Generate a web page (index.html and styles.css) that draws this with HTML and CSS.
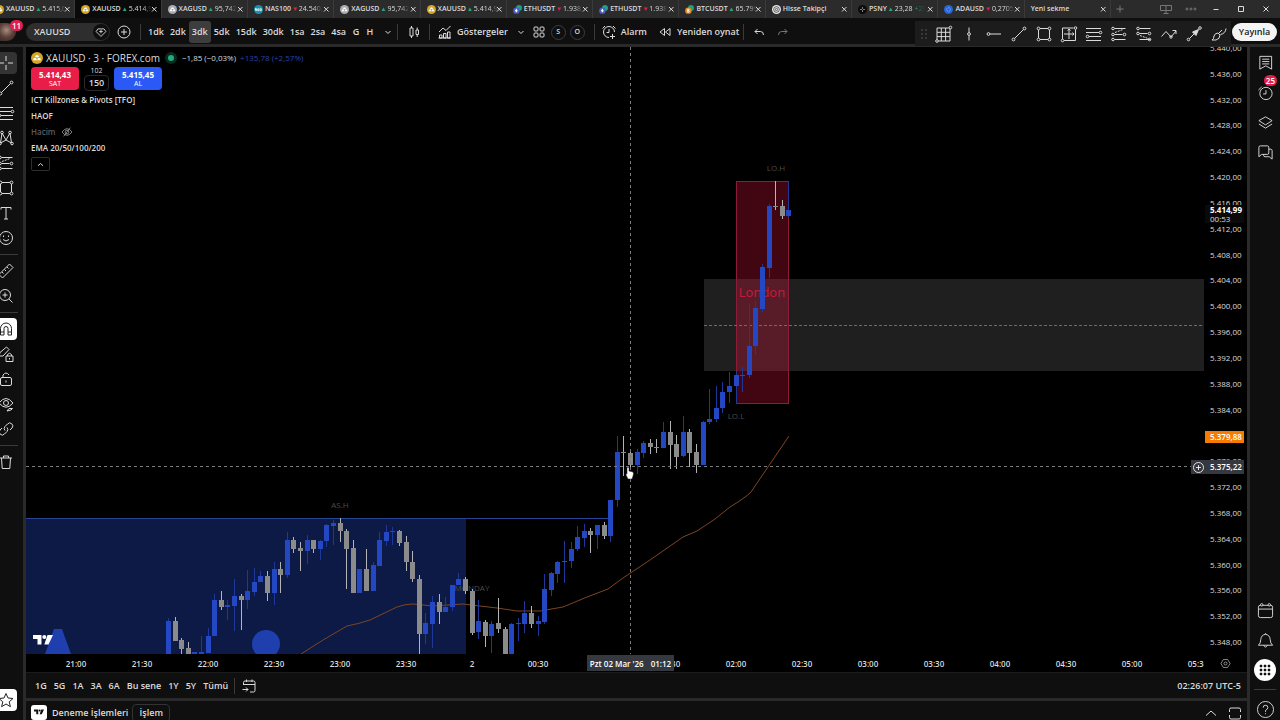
FILE: index.html
```
<!DOCTYPE html>
<html lang="tr">
<head>
    <meta charset="UTF-8">
    <meta name="viewport" content="width=device-width, initial-scale=1.0">
    <title>XAUUSD 5.414,99</title>
    <link rel="stylesheet" href="styles.css">
</head>
<body>

    <!-- Icon set -->
    <svg class="sprite" aria-hidden="true">
        <symbol id="close" viewBox="0 0 8 8"><path d="M2 2l4.5 4.5M6.500 2L2 6.500"/></symbol>
        <symbol id="gold" viewBox="0 0 12 12"><circle cx="6" cy="6" r="6" fill="#d3a623" stroke="none"/><path d="M4.700 3.200h2.600l.7 2H4zM2.800 6h2.400l.6 2.200H2.100zM6.800 6h2.400l.7 2.200H6.200z" fill="#fff" stroke="none"/></symbol>
        <symbol id="silver" viewBox="0 0 12 12"><circle cx="6" cy="6" r="6" fill="#a9abb0" stroke="none"/><path d="M4.700 3.200h2.600l.7 2H4zM2.800 6h2.400l.6 2.200H2.100zM6.800 6h2.400l.7 2.200H6.200z" fill="#fff" stroke="none"/></symbol>
        <symbol id="nas" viewBox="0 0 12 12"><circle cx="6" cy="6" r="6" fill="#1592ad" stroke="none"/><path d="M2 7.500v-3l1.500 3v-3M5 5h1.500v2.500H5zM8 5h1.800v2.500H8z" stroke="#fff"/></symbol>
        <symbol id="eth" viewBox="0 0 12 12"><circle cx="8" cy="4" r="4" fill="#1ba27a" stroke="none"/><circle cx="4.500" cy="7.500" r="4.300" fill="#4d5fc1" stroke="none"/><path d="M4.500 4.500l1.800 3-1.800 2.500-1.800-2.500z" fill="#fff" stroke="none"/></symbol>
        <symbol id="btc" viewBox="0 0 12 12"><circle cx="8" cy="4" r="4" fill="#1ba27a" stroke="none"/><circle cx="4.500" cy="7.500" r="4.300" fill="#e08b2c" stroke="none"/><path d="M3.500 5.500h1.500q1 1 0 2h-1.500h1.800q1 1 0 2H3.500z" stroke="#fff"/></symbol>
        <symbol id="hisse" viewBox="0 0 12 12"><circle cx="6" cy="6" r="6" fill="#e8e8e8" stroke="none"/><circle cx="6" cy="6" r="3.800" stroke="#333"/><circle cx="6" cy="6" r="1.500" stroke="#333"/></symbol>
        <symbol id="psny" viewBox="0 0 12 12"><circle cx="6" cy="6" r="6" fill="#0b0b0b" stroke="none"/><path d="M3 6h2M7 6h2M6 3v2M6 7v2" stroke="#ddd"/></symbol>
        <symbol id="ada" viewBox="0 0 12 12"><circle cx="6" cy="6" r="6" fill="#2766d8" stroke="none"/><circle cx="6" cy="6" r="2.500" stroke="#c9dcff" stroke-dasharray="1 1"/></symbol>
        <symbol id="gem" viewBox="0 0 18 18"><path d="M5.500 5.500h7l2 3L9 14 3.500 8.500zM9 6.500v4M7 8.500h4"/></symbol>
        <symbol id="plus-circle" viewBox="0 0 18 18"><circle cx="9" cy="9" r="6"/><path d="M9 6v6M6 9h6"/></symbol>
        <symbol id="chevron" viewBox="0 0 18 18"><path d="M6.500 8L9 10.500 11.500 8"/></symbol>
        <symbol id="chevron-up" viewBox="0 0 18 18"><path d="M4 11.500L9 7l5 4.500"/></symbol>
        <symbol id="candles" viewBox="0 0 18 18"><path d="M5 5h3v8H5zM6.500 3v2M6.500 13v2M11 7h2.500v4.500H11zM12.200 4.500V7M12.200 11.500V14"/></symbol>
        <symbol id="indicators" viewBox="0 0 18 18"><path d="M3.500 15v-3h2.500v3zM7.500 15v-4.500h2.500V15zM11.500 15V9H14v6zM3 9l4-4 3 2.500 4.500-4.500M2.500 15h12.500"/></symbol>
        <symbol id="layouts" viewBox="0 0 18 18"><rect x="4" y="4" width="4" height="4" rx="1"/><rect x="10" y="4" width="4" height="4" rx="1"/><rect x="4" y="10" width="4" height="4" rx="1"/><rect x="10" y="10" width="4" height="4" rx="1"/></symbol>
        <symbol id="alarm" viewBox="0 0 18 18"><path d="M14.500 9a5.500 5.500 0 1 0-5.500 5.500M9 6v3.500H6.500M2.500 5.500L5 3M13 3l2.500 2.500M12.500 11v5M10 13.500h5"/></symbol>
        <symbol id="rewind" viewBox="0 0 18 18"><path d="M8.500 5.500v7L4 9zM14 5.500v7L9.500 9z"/></symbol>
        <symbol id="undo" viewBox="0 0 18 18"><path d="M7.500 6L5 8.500 7.500 11M5 8.500h5.500q3 0 3 3.500"/></symbol>
        <symbol id="redo" viewBox="0 0 18 18"><path d="M10.500 6L13 8.500 10.500 11M13 8.500H7.500q-3 0-3 3.500"/></symbol>
        <symbol id="grid-tool" viewBox="0 0 18 18"><path d="M2 3h13v13H2zM6.300 3v13M10.600 3v13M2 7.300h13M2 11.600h13"/><g fill="#1c1c1c"><circle cx="2" cy="16" r="1.300"/><circle cx="15.500" cy="2.500" r="1.300"/></g></symbol>
        <symbol id="vline" viewBox="0 0 18 18"><path d="M9 2.500v5M9 10.500v5"/><circle cx="9" cy="9" r="1.400"/></symbol>
        <symbol id="ray" viewBox="0 0 18 18"><circle cx="3.500" cy="9" r="1.400"/><path d="M5 9h11"/></symbol>
        <symbol id="line" viewBox="0 0 18 18"><circle cx="3.500" cy="14.500" r="1.400"/><circle cx="14.500" cy="3.500" r="1.400"/><path d="M4.500 13.500l9-9"/></symbol>
        <symbol id="rect" viewBox="0 0 18 18"><path d="M5 3.500h8M5 14.500h8M3.500 5v8M14.500 5v8"/><circle cx="3.500" cy="3.500" r="1.400"/><circle cx="14.500" cy="3.500" r="1.400"/><circle cx="3.500" cy="14.500" r="1.400"/><circle cx="14.500" cy="14.500" r="1.400"/></symbol>
        <symbol id="range" viewBox="0 0 18 18"><path d="M2.500 3h11M2.500 3v11M4 15.500h11.500M15.500 4.500v11M9 4v10M4 9h10M7.500 5.500L9 4l1.500 1.500M12.500 7.500L14 9l-1.500 1.500"/><circle cx="2.500" cy="15.500" r="1.300"/><circle cx="15.500" cy="3" r="1.300"/></symbol>
        <symbol id="fib" viewBox="0 0 18 18"><path d="M1 3.500h15M1 7.500h13M4 11.500h12M1 15.500h15"/><circle cx="15.500" cy="7.500" r="1.300"/><circle cx="2.500" cy="11.500" r="1.300"/></symbol>
        <symbol id="long" viewBox="0 0 18 18"><path d="M4.500 3.500h11M4.500 9.500h8M4.500 14.500h11"/><path d="M5 7.500l8-3" stroke-dasharray="2 1"/><circle cx="3" cy="3.500" r="1.300"/><circle cx="3" cy="9.500" r="1.300"/><circle cx="14.500" cy="9.500" r="1.300"/><circle cx="3" cy="14.500" r="1.300"/></symbol>
        <symbol id="short" viewBox="0 0 18 18"><path d="M4.500 3.500h11M4.500 8.500h8M4.500 14.500h11"/><path d="M5 10.500l8 3" stroke-dasharray="2 1"/><circle cx="3" cy="3.500" r="1.300"/><circle cx="3" cy="8.500" r="1.300"/><circle cx="14.500" cy="8.500" r="1.300"/><circle cx="14.500" cy="14.500" r="1.300"/></symbol>
        <symbol id="path-tool" viewBox="0 0 18 18"><path d="M1.500 11.500l4.500-5 5 5.500 5-6M12.500 5.500H16V9"/><circle cx="11" cy="12" r="1.200"/></symbol>
        <symbol id="arrow" viewBox="0 0 18 18"><circle cx="3.500" cy="14.500" r="1.300"/><circle cx="15" cy="3" r="1.300"/><path d="M4.500 13.500L10 8"/><path d="M7.500 7l6-2.500-2.500 6z" fill="currentColor"/></symbol>
        <symbol id="brush" viewBox="0 0 18 18"><path d="M2 15q2-1 2-4 1-3 4-3l2 2q0 4-4 5zM9 8l3-3M10.500 9.500q5-1 5.500-6"/></symbol>
        <symbol id="cross" viewBox="0 0 18 18"><path d="M9 2v5M9 11v5M2 9h5M11 9h5"/></symbol>
        <symbol id="pattern" viewBox="0 0 18 18"><path d="M3.500 14L5 4l4 7 4-7 1.500 10M3.500 14L9 11l5.500 3"/><circle cx="3" cy="14.500" r="1.300"/><circle cx="5" cy="3.500" r="1.300"/><circle cx="13" cy="3.500" r="1.300"/><circle cx="15" cy="14.500" r="1.300"/></symbol>
        <symbol id="text" viewBox="0 0 18 18"><path d="M4 5.500V3.500h10v2M9 3.500v11.500M7 15h4"/></symbol>
        <symbol id="smile" viewBox="0 0 18 18"><circle cx="9" cy="9" r="6.500"/><path d="M6.500 6.500v1.500M11.500 6.500v1.500M6 10.500q3 3 6 0"/></symbol>
        <symbol id="ruler" viewBox="0 0 18 18"><path d="M2 12.500L12.500 2 16 5.500 5.500 16zM5 10l1.500 1.500M7.500 7.500L9 9M10 5l1.500 1.500"/></symbol>
        <symbol id="zoom-in" viewBox="0 0 18 18"><circle cx="8" cy="8" r="5.500"/><path d="M8 5.500v5M5.500 8h5M12 12l3.500 3.500"/></symbol>
        <symbol id="magnet" viewBox="0 0 18 18"><path d="M3.500 15V8.500a5.500 5.500 0 0 1 11 0V15h-3.500V8.500a2 2 0 0 0-4 0V15zM3.500 12h3.500M11 12h3.500"/></symbol>
        <symbol id="lock-draw" viewBox="0 0 18 18"><path d="M2 11l1-3.500L9.500 2 12 4.500 6 11zM9 11h7v5.500H9zM10.500 11V9.500q2-2.500 4 0V11M12.500 13v1.500"/></symbol>
        <symbol id="lock" viewBox="0 0 18 18"><rect x="3.500" y="7.500" width="11" height="8" rx="1.500"/><path d="M6 7.500V5q3-4 6 0M9 10.500v2"/></symbol>
        <symbol id="hide" viewBox="0 0 18 18"><path d="M2 8q7-9 14 0-7 8.500-14 0zM10 16l2-2.500h3.500L14 15z"/><circle cx="9" cy="8" r="2.500"/></symbol>
        <symbol id="link" viewBox="0 0 18 18"><path d="M8 10.500a3 3 0 0 1 0-4L10.500 4A3 3 0 0 1 15 8l-2 2M10 7.500a3 3 0 0 1 0 4L7.500 14A3 3 0 0 1 3 10l2-2"/></symbol>
        <symbol id="trash" viewBox="0 0 18 18"><path d="M3 5h12M4.500 5l.7 10.500h7.600L13.500 5M6.500 5V3h5v2"/></symbol>
        <symbol id="star" viewBox="0 0 18 18"><path d="M9 2.500l2 4.500 5 .5-3.800 3.300 1.200 4.900L9 13l-4.400 2.700 1.200-4.900L2 7.500l5-.5z"/></symbol>
        <symbol id="eye-off" viewBox="0 0 18 18"><path d="M1.500 9q7.500-10 15 0-7.500 10-15 0zM4 15.500L14 2.500"/><circle cx="9" cy="9" r="2.800"/></symbol>
        <symbol id="watchlist" viewBox="0 0 18 18"><path d="M3 2.500h12.500V16L9.300 12.500 3 16zM5.500 5.500H13M5.500 8H13M5.500 10.500H13"/></symbol>
        <symbol id="clock" viewBox="0 0 18 18"><circle cx="9.500" cy="10" r="6.500"/><path d="M9.500 6.500v4H6.500M1.500 6.500L5 3"/></symbol>
        <symbol id="layers" viewBox="0 0 18 18"><path d="M9 3l7 4-7 4.500L2 7zM2 10.500L9 15l7-4.500"/></symbol>
        <symbol id="chat" viewBox="0 0 18 18"><path d="M2 3.500q0-1.500 1.500-1.500H11q1.500 0 1.500 1.500v6q0 1.500-1.500 1.500H5l-3 2.500zM12.500 5.500h2q1.500 0 1.500 1.500v9l-3-2.500H8.500Q7 13.500 7 12v-1"/></symbol>
        <symbol id="calendar" viewBox="0 0 18 18"><rect x="1.500" y="3.500" width="15" height="13" rx="2"/><path d="M2 7.500h14"/><circle cx="5" cy="3" r="1.300" fill="#0f0f0f"/><circle cx="13" cy="3" r="1.300" fill="#0f0f0f"/></symbol>
        <symbol id="bell" viewBox="0 0 18 18"><path d="M1.500 14h15q-2.500-2-2.500-6-.5-5-5-5.500-4.500.5-5 5.500 0 4-2.500 6zM7 14q2 4 4 0M8 2.500q1-2 2 0"/></symbol>
        <symbol id="apps" viewBox="0 0 22 22"><circle cx="11" cy="11" r="11" fill="#fff" stroke="none"/><path d="M6 6h2v2H6zM10 6h2v2h-2zM14 6h2v2h-2zM6 10h2v2H6zM10 10h2v2h-2zM14 10h2v2h-2zM6 14h2v2H6zM10 14h2v2h-2zM14 14h2v2h-2z" fill="#111" stroke="#111" stroke-width=".5"/></symbol>
        <symbol id="help" viewBox="0 0 18 18"><circle cx="9" cy="9" r="8.500"/><path d="M6.500 7q0-2.500 2.500-2.500T11.500 7q0 1.500-2.500 3v1.500M9 13v1"/></symbol>
        <symbol id="goto" viewBox="0 0 18 18"><path d="M3.500 8V5.500Q3.500 4 5 4h8.500Q15 4 15 5.500v8q0 1.500-1.500 1.500H10M3.500 7.500H15M6.500 2.500V5M12 2.500V5M2.500 12.500h5.500M6 10.500l2 2-2 2"/></symbol>
        <symbol id="settings" viewBox="0 0 18 18"><path d="M5.500 2.500h7L16.500 9l-4 6.500h-7L1.500 9z"/><circle cx="9" cy="9" r="2.500"/></symbol>
        <symbol id="expand" viewBox="0 0 18 18"><path d="M3.500 8V5.500Q3.500 4 5 4h8q1.500 0 1.500 1.500V8M3.500 11v2.500Q3.500 15 5 15h8q1.500 0 1.500-1.500V11"/></symbol>
        <symbol id="tv" viewBox="0 0 20 12"><path d="M0 1h8.500v9.500H4.500V5H0zM14.500 1H20l-4.500 9.500h-4.200z" fill="currentColor" stroke="none"/><circle cx="11.300" cy="3" r="2" fill="currentColor" stroke="none"/></symbol>
    </svg>

    <!-- Window tabs -->
    <header class="titlebar">
        <nav class="tabs">
            <div class="tab"><a href="#"><svg><use href="#gold"/></svg><b>XAUUSD</b><i class="up">▲</i><span>5.415,0</span></a><button aria-label="Kapat"><svg><use href="#close"/></svg></button></div>
            <div class="tab active"><a href="#"><svg><use href="#gold"/></svg><b>XAUUSD</b><i class="up">▲</i><span>5.414,9</span></a><button aria-label="Kapat"><svg><use href="#close"/></svg></button></div>
            <div class="tab"><a href="#"><svg><use href="#silver"/></svg><b>XAGUSD</b><i class="up">▲</i><span>95,742</span></a><button aria-label="Kapat"><svg><use href="#close"/></svg></button></div>
            <div class="tab"><a href="#"><svg><use href="#nas"/></svg><b>NAS100</b><i class="down">▼</i><span>24.540,</span></a><button aria-label="Kapat"><svg><use href="#close"/></svg></button></div>
            <div class="tab"><a href="#"><svg><use href="#silver"/></svg><b>XAGUSD</b><i class="up">▲</i><span>95,742</span></a><button aria-label="Kapat"><svg><use href="#close"/></svg></button></div>
            <div class="tab"><a href="#"><svg><use href="#gold"/></svg><b>XAUUSD</b><i class="up">▲</i><span>5.414,9</span></a><button aria-label="Kapat"><svg><use href="#close"/></svg></button></div>
            <div class="tab"><a href="#"><svg><use href="#eth"/></svg><b>ETHUSDT</b><i class="down">▼</i><span>1.938,</span></a><button aria-label="Kapat"><svg><use href="#close"/></svg></button></div>
            <div class="tab"><a href="#"><svg><use href="#eth"/></svg><b>ETHUSDT</b><i class="down">▼</i><span>1.938</span></a><button aria-label="Kapat"><svg><use href="#close"/></svg></button></div>
            <div class="tab"><a href="#"><svg><use href="#btc"/></svg><b>BTCUSDT</b><i class="up">▲</i><span>65.799</span></a><button aria-label="Kapat"><svg><use href="#close"/></svg></button></div>
            <div class="tab"><a href="#"><svg><use href="#hisse"/></svg><b>Hisse Takipçi</b></a><button aria-label="Kapat"><svg><use href="#close"/></svg></button></div>
            <div class="tab"><a href="#"><svg><use href="#psny"/></svg><b>PSNY</b><i class="up">▲</i><span>23,28 <em>+20</em></span></a><button aria-label="Kapat"><svg><use href="#close"/></svg></button></div>
            <div class="tab"><a href="#"><svg><use href="#ada"/></svg><b>ADAUSD</b><i class="down">▼</i><span>0,2705</span></a><button aria-label="Kapat"><svg><use href="#close"/></svg></button></div>
            <div class="tab"><a href="#"><b>Yeni sekme</b></a><button aria-label="Kapat"><svg><use href="#close"/></svg></button></div>
        </nav>
        <button class="new-tab" aria-label="Yeni sekme"><svg viewBox="0 0 18 18"><path d="M9 5.500v7M5.500 9h7"/></svg></button>
        <div class="window-buttons">
            <button class="dim" aria-label="Ekranlar"><svg viewBox="0 0 18 18"><path d="M3.500 5.500h11v5h-11zM9 5.500v8M6.500 13.500h5"/></svg></button>
            <button class="dim" aria-label="Menü"><svg viewBox="0 0 18 18"><circle cx="5" cy="9" r="1"/><circle cx="9" cy="9" r="1"/><circle cx="13" cy="9" r="1"/></svg></button>
            <button aria-label="Küçült"><svg viewBox="0 0 18 18"><path d="M6.500 9.500h5"/></svg></button>
            <button aria-label="Büyüt"><svg viewBox="0 0 18 18"><path d="M6.500 6.500h5v5h-5z"/></svg></button>
            <button aria-label="Kapat"><svg viewBox="0 0 18 18"><path d="M6.500 6.500l5 5M11.500 6.500l-5 5"/></svg></button>
        </div>
    </header>

    <!-- Top toolbar -->
    <div class="toolbar">
        <div class="avatar"><span class="badge">11</span></div>
        <button class="symbol">XAUUSD <svg class="icon"><use href="#gem"/></svg></button>
        <button class="compare" aria-label="Karşılaştır"><svg class="icon"><use href="#plus-circle"/></svg></button>
        <span class="sep"></span>
        <div class="intervals">
            <button>1dk</button><button>2dk</button><button class="active">3dk</button><button>5dk</button><button>15dk</button><button>30dk</button><button>1sa</button><button>2sa</button><button>4sa</button><button>G</button><button>H</button>
        </div>
        <button aria-label="Periyotlar"><svg class="icon"><use href="#chevron"/></svg></button>
        <span class="sep"></span>
        <button class="wide" aria-label="Mumlar"><svg class="icon"><use href="#candles"/></svg></button>
        <span class="sep"></span>
        <button class="labelled first"><svg class="icon"><use href="#indicators"/></svg>Göstergeler</button>
        <button aria-label="Favoriler"><svg class="icon"><use href="#chevron"/></svg></button>
        <button aria-label="Şablonlar"><svg class="icon"><use href="#layouts"/></svg></button>
        <button class="round">S</button>
        <button class="round">O</button>
        <span class="sep"></span>
        <button class="labelled"><svg class="icon"><use href="#alarm"/></svg>Alarm</button>
        <button class="labelled"><svg class="icon"><use href="#rewind"/></svg>Yeniden oynat</button>
        <span class="sep"></span>
        <button class="undo" aria-label="Geri al"><svg class="icon"><use href="#undo"/></svg></button>
        <button class="dim" aria-label="Yinele"><svg class="icon"><use href="#redo"/></svg></button>

        <div class="favorites">
            <svg class="grip" viewBox="0 0 8 12"><path d="M1 2h2M5 2h2M1 6h2M5 6h2M1 10h2M5 10h2"/></svg>
            <button aria-label="Izgara"><svg class="icon"><use href="#grid-tool"/></svg></button>
            <button aria-label="Dikey çizgi"><svg class="icon"><use href="#vline"/></svg></button>
            <button aria-label="Yatay ışın"><svg class="icon"><use href="#ray"/></svg></button>
            <button aria-label="Trend çizgisi"><svg class="icon"><use href="#line"/></svg></button>
            <button aria-label="Dikdörtgen"><svg class="icon"><use href="#rect"/></svg></button>
            <button aria-label="Fiyat aralığı"><svg class="icon"><use href="#range"/></svg></button>
            <button aria-label="Fibonacci"><svg class="icon"><use href="#fib"/></svg></button>
            <button aria-label="Uzun pozisyon"><svg class="icon"><use href="#long"/></svg></button>
            <button aria-label="Kısa pozisyon"><svg class="icon"><use href="#short"/></svg></button>
            <button aria-label="Yol"><svg class="icon"><use href="#path-tool"/></svg></button>
            <button aria-label="Ok"><svg class="icon"><use href="#arrow"/></svg></button>
            <button aria-label="Fırça"><svg class="icon"><use href="#brush"/></svg></button>
        </div>
        <button class="publish">Yayınla</button>
    </div>

    <div class="workspace">
        <!-- Drawing tools -->
        <aside class="tools">
            <button class="hover" aria-label="İmleç"><svg class="icon"><use href="#cross"/></svg></button>
            <button aria-label="Trend çizgisi"><svg class="icon"><use href="#line"/></svg></button>
            <button aria-label="Fibonacci"><svg class="icon"><use href="#fib"/></svg></button>
            <button aria-label="Formasyon"><svg class="icon"><use href="#pattern"/></svg></button>
            <button aria-label="Tahmin"><svg class="icon"><use href="#long"/></svg></button>
            <button aria-label="Şekiller"><svg class="icon"><use href="#rect"/></svg></button>
            <button aria-label="Metin"><svg class="icon"><use href="#text"/></svg></button>
            <button aria-label="Simgeler"><svg class="icon"><use href="#smile"/></svg></button>
            <hr>
            <button aria-label="Ölç"><svg class="icon"><use href="#ruler"/></svg></button>
            <button aria-label="Yakınlaştır"><svg class="icon"><use href="#zoom-in"/></svg></button>
            <hr>
            <button class="on" aria-label="Mıknatıs"><svg class="icon"><use href="#magnet"/></svg></button>
            <button aria-label="Çizim modu"><svg class="icon"><use href="#lock-draw"/></svg></button>
            <button aria-label="Kilitle"><svg class="icon"><use href="#lock"/></svg></button>
            <button aria-label="Gizle"><svg class="icon"><use href="#hide"/></svg></button>
            <button aria-label="Bağla"><svg class="icon"><use href="#link"/></svg></button>
            <hr>
            <button aria-label="Sil"><svg class="icon"><use href="#trash"/></svg></button>
            <button class="on last" aria-label="Favori çizimler"><svg class="icon"><use href="#star"/></svg></button>
        </aside>

        <main class="center">
            <div class="chart">
                <div class="pane">
                    <svg class="plot" viewBox="26 47 1178 607" preserveAspectRatio="xMinYMin slice">
                        <rect class="asia" x="26" y="518" width="440" height="136"/>
                        <path d="M26 518.500H610" stroke="#274594"/>
                        <path class="watermark" d="M45 654l9-25h8l9 25z"/>
                        <circle class="watermark" cx="266" cy="644" r="14"/>
                        <rect class="gap-zone" x="704" y="279" width="500" height="92"/>
                        <rect x="736.500" y="181.500" width="52" height="222" fill="#f0173f" fill-opacity=".27" stroke="#8c1c38"/>
                        <path d="M704 325.500h500" stroke="#6c6c6c" stroke-dasharray="3 2"/>
                        <g class="marks">
                            <text x="340" y="508">AS.H</text>
                            <text x="472" y="591">MONDAY</text>
                            <text x="736" y="419">LO.L</text>
                            <text x="776" y="171">LO.H</text>
                            <text class="session" x="762" y="297">London</text>
                        </g>
                        <path class="ema" d="M301 654L323 640 347 626Q358 624 370 620L397 607Q405 604 413 604L433 606 463 604 497 608 517 611 540 611 563 607 587 597 608 589 623 578 650 560 683 537 697 531 715 519 730 507Q745 498 751 492L770 464 789 436"/>
                        <g id="candleLayer"></g>
                        <path class="crosshair" d="M630.500 47V654M26 466.500H1204"/>
                        <path d="M627 468q1-2 2 0v3l4 1q1 1 0 4l-1 3h-4l-2-4q0-2 1-1z" fill="#fff" stroke="#222" stroke-width=".5"/>
                    </svg>

                    <div class="legend">
                        <div class="title-row">
                            <svg class="coin"><use href="#gold"/></svg>
                            <h1>XAUUSD · 3 · FOREX.com</h1>
                            <span class="dot"></span>
                            <span class="change">−1,85 (−0,03%)</span>
                            <span class="gain">+135,78 (+2,57%)</span>
                        </div>
                        <div class="trade-row">
                            <button class="sell"><b>5.414,43</b>SAT</button>
                            <div class="spread"><span>102</span><button>150</button></div>
                            <button class="buy"><b>5.415,45</b>AL</button>
                        </div>
                        <div class="study">ICT Killzones &amp; Pivots [TFO]</div>
                        <div class="study">HAOF</div>
                        <div class="study off">Hacim <svg><use href="#eye-off"/></svg></div>
                        <div class="study">EMA 20/50/100/200</div>
                        <button class="collapse" aria-label="Daralt"><svg><use href="#chevron-up"/></svg></button>
                    </div>
                    <svg class="tv-logo"><use href="#tv"/></svg>
                </div>

                <div class="price-axis">
                    <div class="prices" id="prices"></div>
                    <div class="tag last-price"><b>5.414,99</b>00:53</div>
                    <div class="tag ema-price">5.379,88</div>
                    <div class="tag cursor-price"><svg><use href="#plus-circle"/></svg>5.375,22</div>
                </div>

                <div class="time-axis">
                    <div class="times" id="times"></div>
                    <div class="cursor-time"><span>Pzt 02 Mar '26</span><span>01:12</span></div>
                </div>
                <button class="axis-settings" aria-label="Ayarlar"><svg><use href="#settings"/></svg></button>
            </div>

            <div class="ranges">
                <button>1G</button><button>5G</button><button>1A</button><button>3A</button><button>6A</button><button>Bu sene</button><button>1Y</button><button>5Y</button><button>Tümü</button>
                <span class="sep"></span>
                <button aria-label="Tarihe git"><svg class="icon"><use href="#goto"/></svg></button>
                <button class="time">02:26:07 UTC-5</button>
            </div>

            <footer class="broker">
                <span class="broker-logo"><svg><use href="#tv"/></svg></span>
                <a href="#">Deneme İşlemleri</a>
                <button class="trade">İşlem</button>
                <button class="push" aria-label="Aç"><svg class="icon"><use href="#chevron-up"/></svg></button>
                <button aria-label="Tam ekran"><svg class="icon"><use href="#expand"/></svg></button>
            </footer>
        </main>

        <!-- Right sidebar -->
        <aside class="widgets">
            <button aria-label="İzleme listesi"><svg class="icon"><use href="#watchlist"/></svg></button>
            <button aria-label="Alarmlar"><svg class="icon"><use href="#clock"/></svg><span class="badge">25</span></button>
            <button aria-label="Katmanlar"><svg class="icon"><use href="#layers"/></svg></button>
            <button aria-label="Sohbet"><svg class="icon"><use href="#chat"/></svg></button>
            <button class="bottom" aria-label="Takvim"><svg class="icon"><use href="#calendar"/></svg></button>
            <button aria-label="Bildirimler"><svg class="icon"><use href="#bell"/></svg></button>
            <button aria-label="Ürünler"><svg class="apps"><use href="#apps"/></svg></button>
            <hr>
            <button aria-label="Yardım"><svg class="icon"><use href="#help"/></svg></button>
        </aside>
    </div>

    <script src="script.js"></script>
</body>
</html>
```
FILE: styles.css
```
* {
    box-sizing: border-box;
}
body {
    margin: 0;
    height: 100vh;
    display: flex;
    flex-direction: column;
    overflow: hidden;
    background-color: #2a2a2a;
    color: #dbdbdb;
    font-family: "Open Sans", "Noto Sans", sans-serif;
    font-size: 9px;
    line-height: 12px;
}
button {
    display: flex;
    align-items: center;
    justify-content: center;
    margin: 0;
    padding: 0;
    border: none;
    background: none;
    color: inherit;
    font: inherit;
    cursor: pointer;
}
a {
    color: inherit;
    text-decoration: none;
}
svg {
    flex: none;
    fill: none;
    stroke: currentColor;
    stroke-width: 1;
}
.sprite {
    display: none;
}
.icon {
    width: 18px;
    height: 18px;
}
.dim {
    color: #777;
}
.sep {
    flex: none;
    width: 1px;
    height: 16px;
    background-color: #3a3a3a;
}
.badge {
    position: absolute;
    height: 11px;
    padding: 0 2px;
    border-radius: 6px;
    background-color: #e0204b;
    color: #fff;
    font-size: 8px;
    font-weight: 600;
    line-height: 11px;
}

/* Window tabs */
.titlebar {
    flex: none;
    display: flex;
    align-items: center;
    height: 18px;
    background-color: #2b2b2b;
}
.tabs {
    flex: 0 1 1122px;
    display: grid;
    grid-template-columns: repeat(13, minmax(0, 1fr));
    margin-left: -11px;
}
.tab {
    display: flex;
    align-items: center;
    height: 18px;
    padding: 0 3px 0 6px;
    border-right: 1px solid #3a3a3a;
}
.tab.active {
    background-color: #0a0a0a;
}
.tab a {
    flex: 1;
    display: flex;
    align-items: center;
    gap: 1px;
    min-width: 0;
    font-size: 7px;
    white-space: nowrap;
}
.tab a svg {
    width: 9px;
    height: 9px;
    margin-right: 1px;
}
.tab b {
    font-weight: 600;
}
.tab i {
    font-size: 6px;
    font-style: normal;
}
.tab span {
    -webkit-mask-image: linear-gradient(90deg, #000 60%, transparent);
    mask-image: linear-gradient(90deg, #000 60%, transparent);
}
.tab em {
    color: #22ab7d;
    font-style: normal;
}
.up {
    color: #22ab7d;
}
.down {
    color: #e0204b;
}
.tab button svg {
    width: 8px;
    height: 8px;
}
.new-tab svg,
.window-buttons svg {
    width: 18px;
    height: 18px;
}
.new-tab {
    color: #777;
}
.window-buttons {
    display: flex;
    gap: 7px;
    margin-left: auto;
    margin-right: 5px;
}

/* Top toolbar */
.toolbar {
    flex: none;
    display: flex;
    align-items: center;
    height: 26px;
    margin-bottom: 3px;
    padding-top: 2px;
    background-color: #0f0f0f;
    font-weight: 600;
}
.avatar {
    position: relative;
    width: 16px;
    height: 18px;
    margin-right: 10px;
    border-radius: 0 9px 9px 0;
    background: radial-gradient(circle at 40% 40%, #a58c80, #5b3f38 50%, #2c2422);
}
.avatar .badge {
    top: -3px;
    left: 10px;
    min-width: 12px;
    text-align: center;
}
.symbol {
    justify-content: space-between;
    width: 84px;
    height: 18px;
    padding: 0 1px 0 8px;
    border-radius: 9px;
    background-color: #2e2e2e;
}
.symbol svg {
    width: 16px;
    height: 16px;
    border-radius: 8px;
    background-color: #0f0f0f;
}
.compare {
    margin: 0 7px 0 5px;
}
.intervals {
    display: flex;
    margin: 0 2px 0 4px;
}
.intervals button {
    min-width: 14px;
    height: 22px;
    padding: 0 3px;
    border-radius: 3px;
}
.intervals .active {
    background-color: #3d3d3d;
}
.wide {
    width: 31px;
}
.labelled {
    gap: 3px;
    margin: 0 4px 0 5px;
}
.labelled.first {
    margin-left: 6px;
}
.round {
    width: 15px;
    height: 15px;
    margin: 0 1px 0 3px;
    border: 1px solid #3d3d3d;
    border-radius: 8px;
    font-size: 7px;
}
.round + .sep {
    margin-left: 8px;
}
.undo {
    margin: 0 6px;
}
.favorites {
    align-self: stretch;
    display: flex;
    align-items: center;
    margin: 1px 1px -2px auto;
    padding-left: 5px;
    background-color: #1c1c1c;
}
.favorites button {
    width: 25px;
}
.favorites .grip {
    width: 8px;
    height: 12px;
    margin-right: 3px;
    color: #555;
}
.publish {
    width: 45px;
    height: 18px;
    margin-right: 3px;
    border-radius: 9px;
    background-color: #f4f4f4;
    color: #1a1a1a;
}

/* Workspace */
.workspace {
    flex: 1;
    display: flex;
    gap: 3px;
    min-height: 0;
}
.tools {
    display: flex;
    flex-direction: column;
    gap: 3px;
    width: 23px;
    padding: 5px 0 9px;
    overflow: hidden;
    background-color: #0f0f0f;
}
.tools button {
    flex: none;
    width: 22px;
    height: 22px;
    margin-left: -5px;
    border-radius: 4px;
}
.tools .hover {
    background-color: #333;
}
.tools .on {
    background-color: #fff;
    color: #222;
}
.tools .last {
    margin-top: auto;
}
hr {
    width: 18px;
    height: 1px;
    margin: 2px 0;
    border: none;
    background-color: #3a3a3a;
}
.center {
    flex: 1;
    display: flex;
    flex-direction: column;
    min-width: 0;
}
.chart {
    flex: 1;
    display: grid;
    grid-template-columns: minmax(0, 1fr) 43px;
    grid-template-rows: minmax(0, 1fr) 18px;
    min-height: 0;
    background-color: #000;
}
.pane {
    position: relative;
    overflow: hidden;
}
.plot {
    display: block;
    width: 100%;
    height: 100%;
}
.asia,
.watermark,
.gap-zone {
    stroke: none;
}
.asia {
    fill: #0c1a45;
}
.watermark {
    fill: #1f3fae;
}
.gap-zone {
    fill: #1f1f1f;
}
.marks text {
    fill: #4c4c4c;
    stroke: none;
    font-size: 8px;
    text-anchor: middle;
}
.marks .session {
    fill: #c41c3d;
    font-size: 13px;
}
.ema {
    stroke: #7d4524;
}
.bull {
    fill: #2447c4;
}
.bear {
    fill: #8b8b8b;
}
.bull path {
    stroke: #1d379a;
}
.bear path {
    stroke: #b5b5b5;
}
.candle rect {
    stroke: none;
}
.crosshair {
    stroke: #7b7b7b;
    stroke-dasharray: 3 3;
}

/* Legend */
.legend {
    position: absolute;
    top: 4px;
    left: 5px;
}
.title-row {
    display: flex;
    align-items: center;
    gap: 4px;
    height: 13px;
}
.title-row h1 {
    margin: 0 0 0 -1px;
    font-size: 10px;
    font-weight: 500;
}
.coin {
    width: 12px;
    height: 12px;
}
.dot {
    width: 6px;
    height: 6px;
    margin: 0 4px;
    border-radius: 3px;
    background-color: #22ab7d;
    box-shadow: 0 0 0 3px #0a2a20;
}
.change,
.gain {
    font-size: 8px;
}
.gain {
    color: #2743b0;
}
.trade-row {
    display: flex;
    gap: 5px;
    margin-top: 3px;
}
.sell,
.buy {
    flex-direction: column;
    width: 48px;
    height: 23px;
    border-radius: 4px;
    color: #fff;
    font-size: 7px;
    line-height: 9px;
}
.sell b,
.buy b {
    font-size: 8px;
}
.sell {
    background-color: #e91e48;
}
.buy {
    background-color: #2b59f5;
}
.spread {
    display: flex;
    flex-direction: column;
    align-items: center;
    font-size: 7px;
    line-height: 8px;
}
.spread button {
    width: 25px;
    height: 16px;
    border: 1px solid #2a2a2a;
    border-radius: 4px;
    font-size: 9px;
    font-weight: 600;
}
.study {
    display: flex;
    align-items: center;
    gap: 5px;
    height: 16px;
    font-size: 8px;
    font-weight: 600;
}
.trade-row + .study {
    margin-top: 1px;
}
.study.off {
    color: #5c5c5c;
}
.study svg {
    width: 12px;
    height: 12px;
    color: #bbb;
}
.collapse {
    width: 19px;
    height: 14px;
    margin-top: 1px;
    border: 1px solid #2e2e2e;
    border-radius: 2px;
}
.collapse svg {
    width: 9px;
    height: 9px;
    stroke-width: 2;
}
.tv-logo {
    position: absolute;
    bottom: 8px;
    left: 7px;
    width: 20px;
    height: 12px;
    color: #fff;
}

/* Axes */
.price-axis {
    position: relative;
    clip-path: inset(0 0 0 -20px);
    font-size: 8px;
}
.prices {
    display: grid;
    grid-auto-rows: 1fr;
    align-items: center;
    height: calc(100% + 13px);
    margin-top: -12px;
    padding-left: 6px;
}
.tag {
    position: absolute;
    right: 3px;
    width: 39px;
    padding-left: 5px;
    line-height: 12px;
}
.last-price {
    top: 158px;
    line-height: 9px;
    background-color: #0a0a0a;
}
.last-price b {
    display: block;
    color: #fff;
}
.ema-price {
    top: 384px;
    background-color: #f57c00;
    color: #fff;
    font-weight: 600;
}
.cursor-price {
    top: 413px;
    display: flex;
    align-items: center;
    gap: 4px;
    width: 53px;
    height: 14px;
    padding-left: 0;
    background-color: #363840;
    color: #fff;
    font-weight: 600;
}
.cursor-price svg {
    width: 15px;
    height: 15px;
}
.time-axis {
    position: relative;
    font-size: 8px;
    font-weight: 600;
}
.times {
    display: flex;
    height: 18px;
    padding-left: 17px;
    overflow: hidden;
}
.times span {
    flex: none;
    width: 66px;
    line-height: 20px;
    text-align: center;
}
.cursor-time {
    position: absolute;
    top: 1px;
    left: 561px;
    display: flex;
    justify-content: center;
    gap: 7px;
    width: 87px;
    height: 16px;
    background-color: #363840;
    color: #fff;
    line-height: 18px;
    white-space: nowrap;
}
.axis-settings svg {
    width: 11px;
    height: 11px;
}

/* Bottom bars */
.ranges,
.broker {
    flex: none;
    display: flex;
    align-items: center;
    background-color: #0f0f0f;
    font-weight: 600;
}
.ranges {
    gap: 7px;
    height: 26px;
    margin-bottom: 3px;
    padding: 0 6px 0 9px;
    border-top: 1px solid #1c1c1c;
}
.ranges .sep {
    margin: 0 -2px 0 -1px;
}
.ranges .time {
    margin-left: auto;
}
.broker {
    height: 19px;
    padding-left: 5px;
    padding-right: 3px;
    overflow: hidden;
}
.broker-logo {
    display: flex;
    align-items: center;
    justify-content: center;
    width: 16px;
    height: 15px;
    margin: 3px 5px 0 0;
    border-radius: 3px;
    background-color: #fff;
    color: #111;
}
.broker-logo svg {
    width: 10px;
    height: 6px;
}
.broker a,
.broker .icon {
    margin-top: 5px;
}
.trade {
    width: 38px;
    height: 18px;
    margin: 5px 0 0 4px;
    border: 1px solid #333;
    border-radius: 4px;
}
.broker .push {
    margin: 0 6px 0 auto;
}

/* Right sidebar */
.widgets {
    display: flex;
    flex-direction: column;
    align-items: center;
    gap: 8px;
    width: 30px;
    padding-top: 4px;
    background-color: #0f0f0f;
}
.widgets button {
    position: relative;
    flex: none;
    width: 22px;
    height: 22px;
}
.widgets .icon {
    width: 17px;
    height: 17px;
}
.widgets .badge {
    top: -6px;
    right: -1px;
}
.widgets .bottom {
    margin-top: auto;
}
.widgets .apps {
    width: 22px;
    height: 22px;
}
.widgets hr {
    width: 22px;
    margin: 0;
}
```
FILE: script.js
```
// bull/bear flag, high, body top, body bottom, low
const candles = [
    [1, 618, 621, 654, 654], [0, 617, 621, 641, 641], [0, 638, 640, 649, 654], [0, 642, 648, 654, 654],
    [1, 652, 652, 654, 654], [1, 636, 652, 654, 654], [1, 628, 636, 653, 653], [1, 594, 600, 636, 636],
    [0, 591, 600, 607, 610], [1, 600, 605, 607, 620], [1, 579, 596, 606, 631], [0, 594, 596, 600, 630],
    [1, 570, 591, 600, 609], [1, 568, 582, 592, 596], [1, 571, 576, 582, 582], [0, 571, 576, 593, 601],
    [1, 562, 569, 593, 605], [0, 562, 569, 575, 593], [1, 532, 540, 575, 578], [0, 537, 540, 549, 553],
    [0, 542, 548, 551, 571], [1, 535, 540, 551, 564], [0, 540, 540, 549, 553], [1, 540, 541, 549, 560],
    [1, 524, 525, 541, 547], [1, 520, 523, 526, 545], [0, 518, 523, 531, 542], [0, 529, 531, 549, 589],
    [0, 540, 548, 593, 593], [1, 569, 569, 593, 593], [0, 549, 569, 591, 591], [1, 562, 565, 591, 591],
    [1, 532, 540, 566, 566], [1, 525, 532, 541, 546], [1, 527, 531, 532, 545], [0, 530, 531, 543, 546],
    [0, 536, 542, 562, 571], [0, 551, 562, 579, 582], [0, 575, 579, 634, 654], [1, 613, 623, 634, 644],
    [1, 596, 602, 624, 648], [0, 594, 602, 612, 624], [1, 597, 607, 612, 612], [1, 585, 585, 607, 611],
    [1, 573, 579, 585, 585], [0, 577, 579, 591, 594], [0, 589, 591, 633, 635], [1, 600, 621, 632, 639],
    [0, 620, 622, 636, 647], [1, 621, 624, 636, 653], [0, 598, 623, 629, 633], [0, 627, 629, 654, 654],
    [1, 623, 624, 654, 654], [1, 618, 623, 624, 641], [1, 601, 613, 624, 633], [0, 606, 613, 624, 628],
    [1, 616, 621, 624, 636], [1, 574, 589, 622, 624], [1, 572, 573, 590, 596], [1, 561, 562, 574, 583],
    [1, 541, 561, 562, 583], [1, 542, 549, 561, 568], [1, 526, 537, 549, 551], [1, 524, 531, 538, 547],
    [0, 528, 531, 535, 553], [1, 525, 525, 535, 549], [0, 522, 525, 536, 539], [1, 500, 500, 536, 542],
    [1, 436, 452, 500, 507], [0, 436, 452, 453, 476], [0, 450, 453, 465, 467], [1, 449, 452, 465, 474],
    [1, 441, 443, 453, 458], [0, 439, 443, 447, 454], [0, 439, 447, 448, 453], [1, 422, 432, 448, 448],
    [0, 421, 432, 445, 469], [0, 435, 444, 457, 469], [1, 416, 432, 456, 457], [0, 429, 432, 453, 467],
    [0, 444, 452, 465, 473], [1, 421, 422, 465, 465], [1, 389, 419, 422, 424], [1, 386, 408, 419, 422],
    [1, 382, 392, 408, 413], [1, 372, 386, 392, 403], [1, 372, 375, 386, 404], [1, 367, 375, 376, 392],
    [1, 304, 346, 375, 378], [1, 301, 308, 346, 355], [1, 264, 267, 309, 312], [1, 204, 206, 268, 278],
    [0, 181, 206, 207, 210], [0, 200, 206, 216, 219], [1, 182, 210, 216, 217]
];

const firstX = 168;
const step = 6.6;

document.getElementById('candleLayer').innerHTML = candles.map(([bull, high, top, bottom, low], i) => {
    const x = Math.round(firstX + i * step);
    return `<g class="candle ${bull ? 'bull' : 'bear'}">
        <path d="M${x + 0.5} ${high}V${low}"/>
        <rect x="${x - 2}" y="${top}" width="5" height="${Math.max(1, bottom - top)}"/>
    </g>`;
}).join('');

// price scale, 5.440 down to 5.348
let prices = '';
for (let p = 440; p >= 348; p -= 4) {
    prices += `<span>5.${p},00</span>`;
}
document.getElementById('prices').innerHTML = prices;

// time scale, half hours from 21:00; midnight shows the day
let times = '';
for (let m = 21 * 60; m <= 29.5 * 60; m += 30) {
    const hour = String(Math.floor(m / 60) % 24).padStart(2, '0');
    const label = m === 1440 ? '2' : `${hour}:${m % 60 ? '30' : '00'}`;
    times += `<span>${label}</span>`;
}
document.getElementById('times').innerHTML = times;
```
